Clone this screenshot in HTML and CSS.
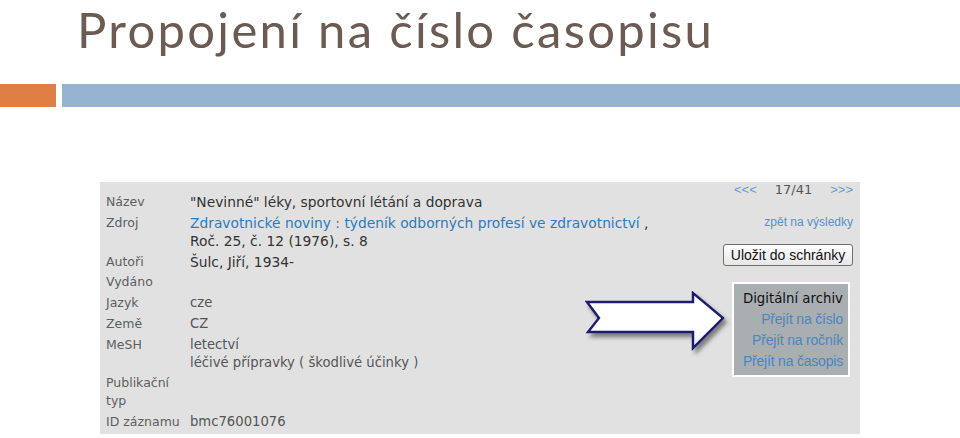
FILE: index.html
```html
<!DOCTYPE html>
<html lang="cs">
<head>
<meta charset="utf-8">
<title>Propojení na číslo časopisu</title>
<link rel="stylesheet" href="styles.css">
</head>
<body>
<div class="slide">
  <header class="header">
    <h1 class="title">Propojení na číslo časopisu</h1>
  </header>
  <div class="bars">
    <div class="bar-orange"></div>
    <div class="bar-blue"></div>
  </div>
  <div class="shot">
    <div class="record">
      <div class="row"><div class="lab">Název</div><div class="val">"Nevinné" léky, sportovní létání a doprava</div></div>
      <div class="row"><div class="lab">Zdroj</div><div class="val"><span class="link">Zdravotnické noviny : týdeník odborných profesí ve zdravotnictví</span> ,<br>Roč. 25, č. 12 (1976), s. 8</div></div>
      <div class="row"><div class="lab">Autoři</div><div class="val">Šulc, Jiří, 1934-</div></div>
      <div class="row"><div class="lab">Vydáno</div><div class="val"></div></div>
      <div class="row"><div class="lab">Jazyk</div><div class="val light">cze</div></div>
      <div class="row"><div class="lab">Země</div><div class="val light">CZ</div></div>
      <div class="row"><div class="lab">MeSH</div><div class="val light">letectví<br>léčivé přípravky ( škodlivé účinky )</div></div>
      <div class="row"><div class="lab">Publikační<br>typ</div><div class="val"></div></div>
      <div class="row"><div class="lab">ID záznamu</div><div class="val light">bmc76001076</div></div>
    </div>
    <div class="side">
      <div class="pager"><span class="nav">&lt;&lt;&lt;</span><span class="count">17/41</span><span class="nav">&gt;&gt;&gt;</span></div>
      <div class="back">zpět na výsledky</div>
      <button class="save" type="button">Uložit do schránky</button>
      <div class="archive">
        <div class="archive-title">Digitální archiv</div>
        <div class="archive-link">Přejít na číslo</div>
        <div class="archive-link">Přejít na ročník</div>
        <div class="archive-link">Přejít na časopis</div>
      </div>
    </div>
    <svg class="arrow" width="146" height="66" viewBox="0 0 146 66" aria-hidden="true">
      <defs>
        <linearGradient id="af" x1="0" y1="0" x2="0" y2="1">
          <stop offset="0" stop-color="#ffffff"/>
          <stop offset="0.6" stop-color="#ffffff"/>
          <stop offset="1" stop-color="#e9ecf4"/>
        </linearGradient>
        <filter id="sh" x="-10%" y="-20%" width="130%" height="150%">
          <feGaussianBlur in="SourceAlpha" stdDeviation="2.2"/>
          <feOffset dx="3" dy="4" result="b"/>
          <feComponentTransfer><feFuncA type="linear" slope="0.45"/></feComponentTransfer>
          <feMerge><feMergeNode/><feMergeNode in="SourceGraphic"/></feMerge>
        </filter>
      </defs>
      <polygon points="2,11 14,27 3,41 108,41 108,57 138,27 108,2 108,11" fill="url(#af)" stroke="#1c1a6e" stroke-width="2.4" stroke-linejoin="miter" filter="url(#sh)"/>
    </svg>
  </div>
</div>
</body>
</html>
```
FILE: styles.css
```css
html, body {
  margin: 0;
  padding: 0;
  background: #ffffff;
}

.slide {
  width: 960px;
  height: 438px;
  overflow: hidden;
}

.header {
  height: 84px;
}

.title {
  margin: 0;
  padding-left: 77px;
  font-family: Lato, "Open Sans", sans-serif;
  font-weight: 400;
  font-size: 49px;
  letter-spacing: 2.3px;
  line-height: normal;
  color: #6b5b53;
  white-space: nowrap;
}

.bars {
  display: flex;
  gap: 6px;
  height: 23px;
}

.bar-orange {
  width: 56px;
  background: #df7f45;
}

.bar-blue {
  flex: 1;
  background: #95b4d2;
}

.shot {
  position: relative;
  margin: 75px 0 0 100px;
  width: 760px;
  height: 252px;
  box-sizing: border-box;
  background: #e1e1e1;
  display: flex;
  padding: 0 7px 0 6px;
  font-family: "DejaVu Sans", Verdana, sans-serif;
}

.record {
  padding-top: 11px;
  flex: 1;
}

.row {
  display: grid;
  grid-template-columns: 84px 1fr;
  line-height: 18px;
  margin-bottom: 2.75px;
}

.lab {
  font-size: 12.5px;
  color: #5e5e5e;
}

.val {
  font-size: 13.8px;
  color: #333333;
}

.val.light {
  color: #555555;
  font-size: 13.2px;
}

.link {
  color: #2b7bbd;
}

.side {
  display: flex;
  flex-direction: column;
  align-items: flex-end;
}

.pager {
  display: flex;
  gap: 18px;
  height: 16px;
  line-height: 16px;
  font-size: 13px;
  margin-top: 0;
}

.nav {
  font-family: "Liberation Sans", Arial, sans-serif;
  color: #6a9acb;
}

.count {
  color: #555555;
}

.back {
  margin-top: 16px;
  font-family: "Liberation Sans", Arial, sans-serif;
  font-size: 12px;
  line-height: 16px;
  color: #5790c8;
}

.save {
  margin-top: 14px;
  width: 130px;
  height: 22px;
  padding: 0;
  border: 1px solid #6f6f6f;
  border-radius: 3px;
  background: linear-gradient(#ffffff, #e6e6e6);
  font-family: "Liberation Sans", Arial, sans-serif;
  font-size: 14px;
  color: #111111;
}

.archive {
  margin-top: 16px;
  margin-right: 3px;
  width: 118px;
  height: 95px;
  box-sizing: border-box;
  border: 2px solid #ffffff;
  background: #a9aeb1;
  padding: 4px 5px 0 0;
  text-align: right;
  font-size: 14px;
  line-height: 21px;
  font-family: "Liberation Sans", Arial, sans-serif;
}

.archive-title {
  font-family: "DejaVu Sans", Verdana, sans-serif;
  font-size: 13.3px;
  color: #111111;
}

.archive-link {
  color: #4a86c3;
  letter-spacing: -0.2px;
}

.arrow {
  position: absolute;
  left: 485px;
  top: 109px;
}
```
